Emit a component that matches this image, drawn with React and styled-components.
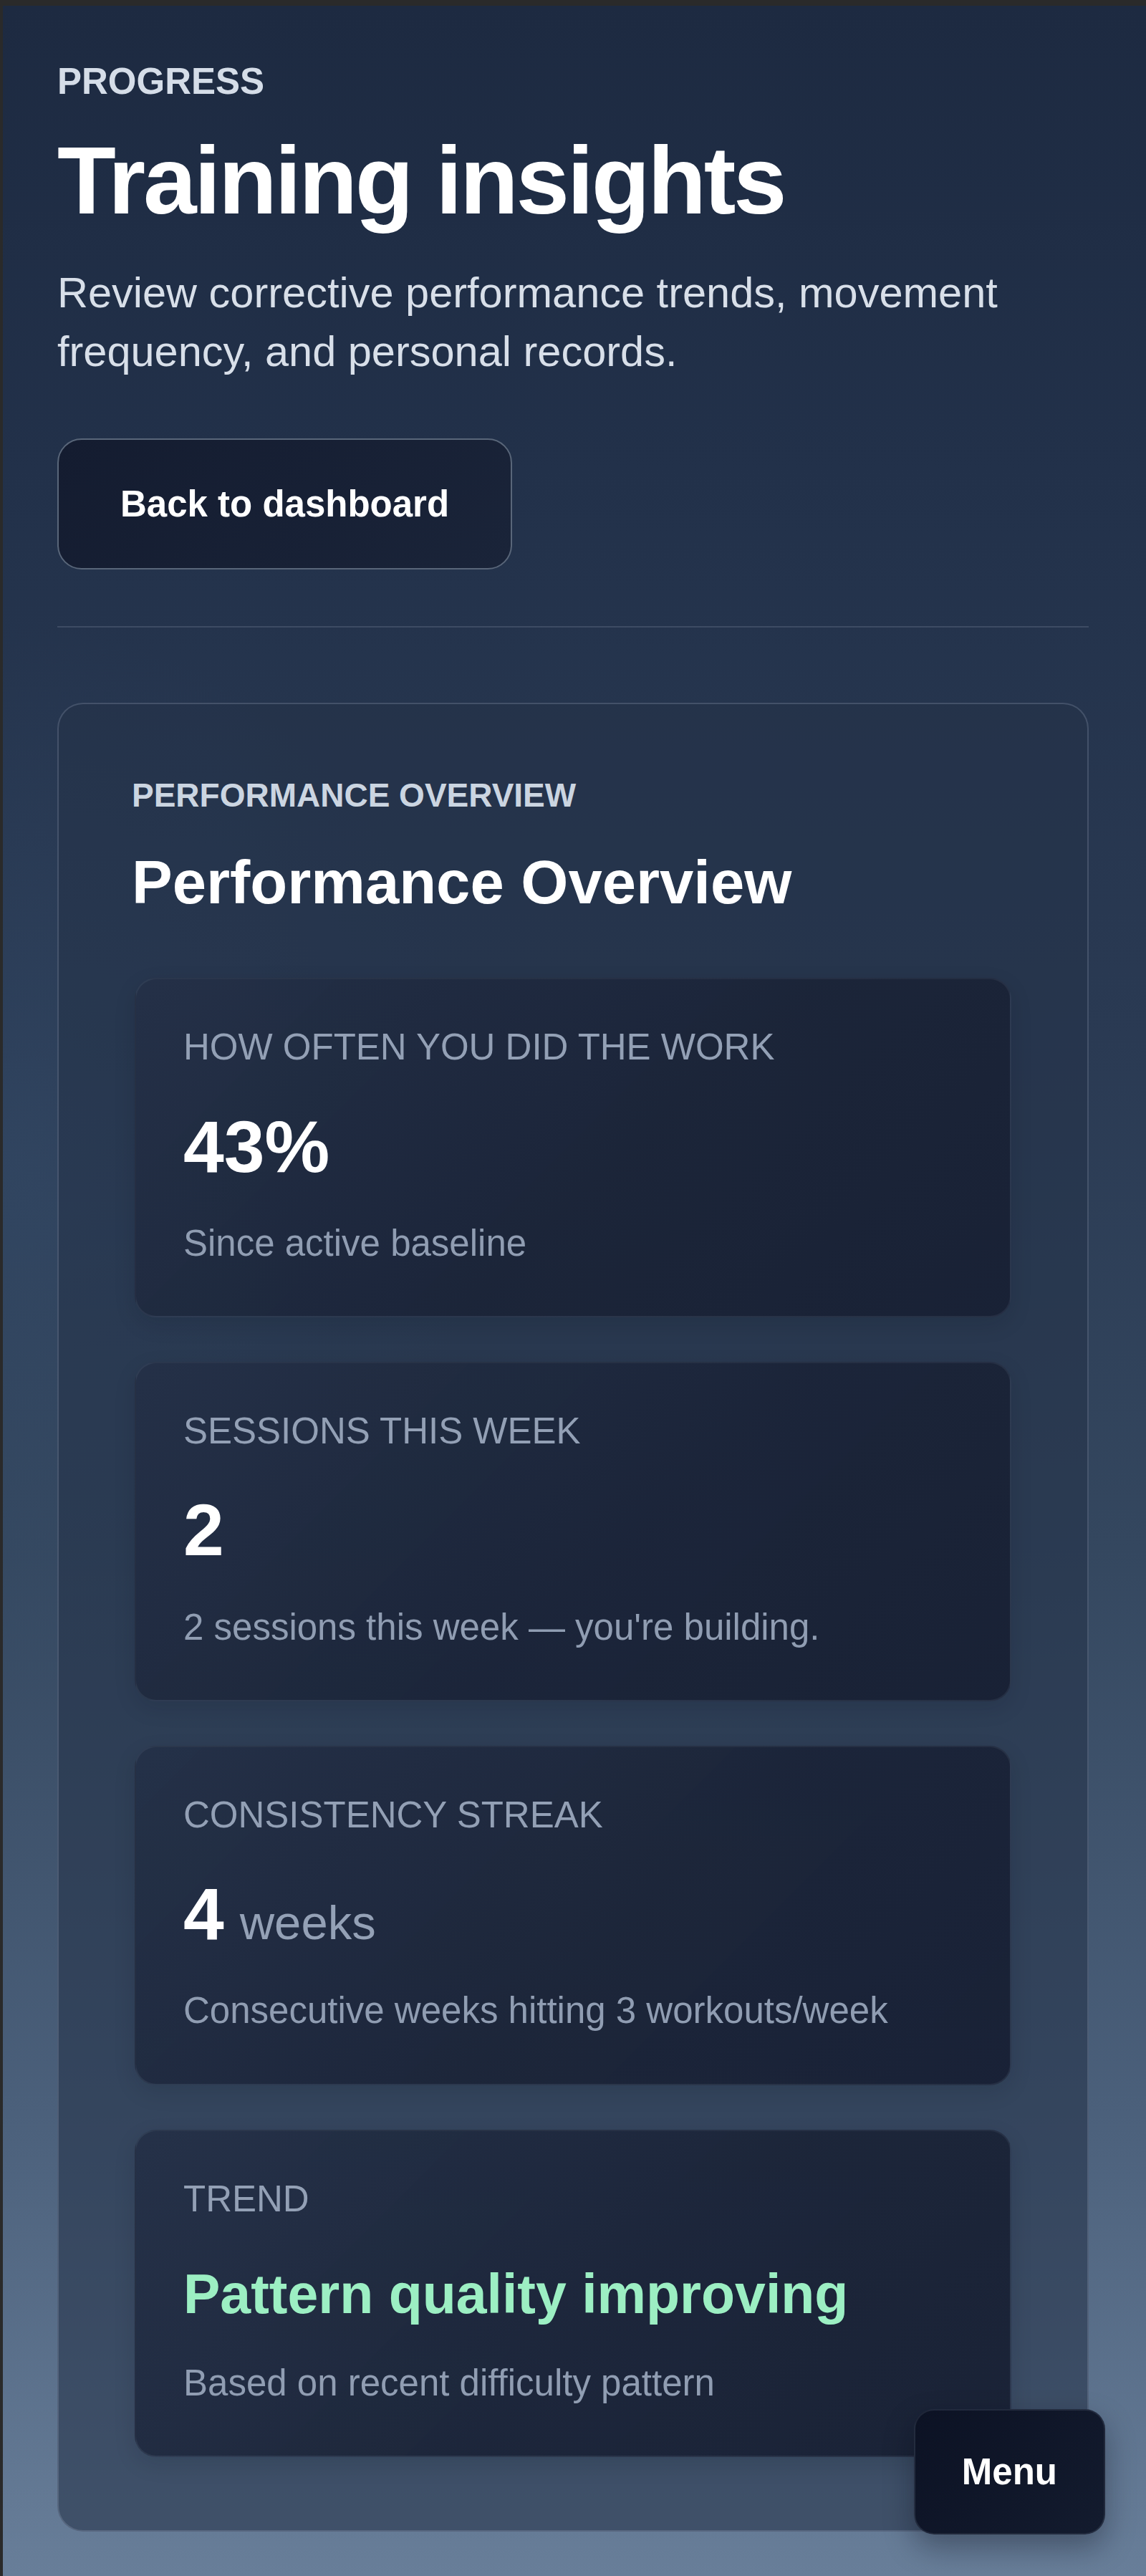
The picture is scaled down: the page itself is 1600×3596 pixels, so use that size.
import React from "react";
import styled, { createGlobalStyle } from "styled-components";

const GlobalStyle = createGlobalStyle`
  *, *::before, *::after { box-sizing: border-box; }
  html, body { margin: 0; padding: 0; }
  body {
    font-family: "Liberation Sans", Arial, Helvetica, sans-serif;
    background: #2b2b2b;
    color: #ffffff;
  }
`;

const Page = styled.div`
  min-height: 100vh;
  border-top: 8px solid #2a2a2a;
  border-left: 4px solid #2a2a2a;
  padding: 75px 80px 60px 76px;
  background:
    radial-gradient(ellipse 60% 30% at 0% 45%, rgba(60, 90, 125, 0.25), transparent 70%),
    linear-gradient(180deg, #1d2a41 0%, #22314a 18%, #2a3a53 40%, #34475f 60%, #4b607b 82%, #687e99 100%);
`;

const Header = styled.header`
  display: flex;
  flex-direction: column;
  align-items: flex-start;
`;

const Eyebrow = styled.div`
  font-size: ${(p) => p.$size || 51}px;
  line-height: 1.2;
  font-weight: 700;
  color: ${(p) => p.$color || "#d5dde8"};
  text-transform: uppercase;
`;

const Title = styled.h1`
  margin: 34px 0 0;
  font-size: 134px;
  line-height: 1.1;
  font-weight: 700;
  letter-spacing: -0.025em;
  color: #ffffff;
`;

const Lead = styled.p`
  margin: 42px 0 0;
  font-size: 59.5px;
  line-height: 1.39;
  color: #d8dfe9;
  max-width: 1420px;
`;

const GhostButton = styled.button`
  margin-top: 79px;
  font-family: inherit;
  font-size: 51px;
  line-height: 1.2;
  font-weight: 700;
  color: #ffffff;
  padding: 59px 86px;
  border: 2px solid #596679;
  border-radius: 34px;
  background: linear-gradient(135deg, #141c30 0%, #1a2439 100%);
  cursor: pointer;
`;

const Divider = styled.hr`
  margin: 79px 0 0;
  border: 0;
  height: 2px;
  background: rgba(148, 163, 184, 0.22);
`;

const Panel = styled.section`
  margin-top: 105px;
  border: 2px solid rgba(148, 163, 184, 0.28);
  border-radius: 36px;
  background: rgba(36, 50, 72, 0.58);
  padding: 100px 102px 102px 102px;
`;

const PanelTitle = styled.h2`
  margin: 43px 0 0;
  font-size: 85px;
  line-height: 1.2;
  font-weight: 700;
  color: #ffffff;
`;

const CardList = styled.div`
  margin-top: 82px;
  padding: 0 4px;
  display: flex;
  flex-direction: column;
  gap: 62px;
`;

const StatCard = styled.article`
  border: 2px solid rgba(148, 163, 184, 0.1);
  border-radius: 30px;
  background: linear-gradient(135deg, rgba(36, 48, 71, 0.92) 0%, rgba(27, 36, 56, 0.94) 55%, rgba(24, 32, 52, 0.95) 100%);
  padding: 64px 62px 66px 66px;
  box-shadow: 0 10px 30px rgba(10, 15, 28, 0.12);
`;

const StatLabel = styled.div`
  font-size: 51px;
  line-height: 1.2;
  color: #93a0b5;
  text-transform: uppercase;
`;

const StatValue = styled.div`
  margin-top: ${(p) => (p.$accent ? 60 : 52)}px;
  margin-bottom: ${(p) => (p.$accent ? 46 : 43)}px;
  font-size: ${(p) => (p.$accent ? 77 : 102)}px;
  line-height: 1.1;
  font-weight: 700;
  color: ${(p) => (p.$accent ? "#9cefc3" : "#ffffff")};
`;

const Unit = styled.span`
  margin-left: 22px;
  font-size: 67px;
  font-weight: 400;
  color: #94a1b6;
`;

const StatNote = styled.div`
  font-size: 51px;
  line-height: 1.4;
  color: #909db2;
`;

const MenuButton = styled.button`
  position: fixed;
  right: 57px;
  bottom: 58px;
  font-family: inherit;
  font-size: 51px;
  line-height: 1.2;
  font-weight: 700;
  color: #ffffff;
  padding: 55px 65px;
  border: 2px solid rgba(148, 163, 184, 0.14);
  border-radius: 28px;
  background: linear-gradient(135deg, #0c1224 0%, #131b2e 100%);
  box-shadow: 0 18px 40px rgba(8, 12, 24, 0.35);
  cursor: pointer;
`;

const stats = [
  { label: "How often you did the work", value: "43%", note: "Since active baseline" },
  { label: "Sessions this week", value: "2", note: "2 sessions this week \u2014 you're building." },
  { label: "Consistency streak", value: "4", unit: "weeks", note: "Consecutive weeks hitting 3 workouts/week" },
  { label: "Trend", value: "Pattern quality improving", note: "Based on recent difficulty pattern", accent: true },
];

export default function App() {
  return (
    <>
      <GlobalStyle />
      <Page>
        <Header>
          <Eyebrow>Progress</Eyebrow>
          <Title>Training insights</Title>
          <Lead>Review corrective performance trends, movement frequency, and personal records.</Lead>
          <GhostButton type="button">Back to dashboard</GhostButton>
        </Header>
        <Divider />
        <Panel>
          <Eyebrow $size={46} $color="#cbd5e1">Performance overview</Eyebrow>
          <PanelTitle>Performance Overview</PanelTitle>
          <CardList>
            {stats.map((s) => (
              <StatCard key={s.label}>
                <StatLabel>{s.label}</StatLabel>
                <StatValue $accent={s.accent}>
                  {s.value}
                  {s.unit && <Unit>{s.unit}</Unit>}
                </StatValue>
                <StatNote>{s.note}</StatNote>
              </StatCard>
            ))}
          </CardList>
        </Panel>
      </Page>
      <MenuButton type="button">Menu</MenuButton>
    </>
  );
}
